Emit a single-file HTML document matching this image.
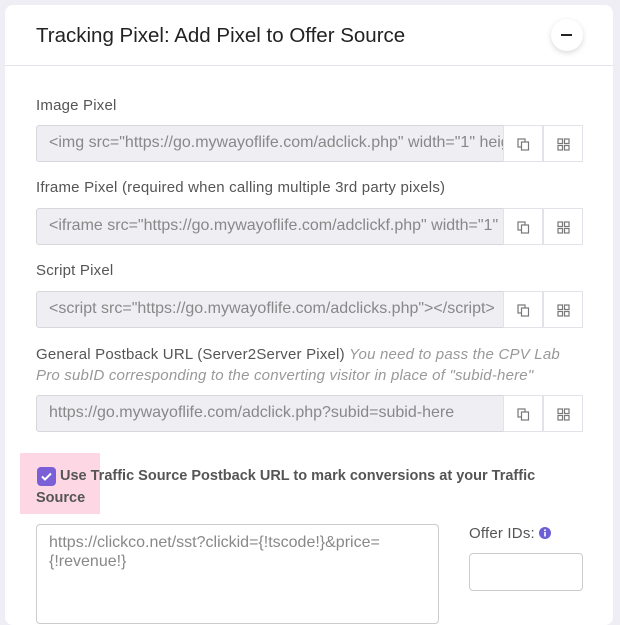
<!DOCTYPE html>
<html><head><meta charset="utf-8"><style>
*{box-sizing:border-box;margin:0;padding:0}
body{width:620px;height:605px;background:#efeef5;font-family:"Liberation Sans",sans-serif;position:relative;overflow:hidden}
.card{position:absolute;left:5px;top:5px;width:608px;height:620px;background:#fff;border-radius:8px}
.hdr{position:absolute;left:0;top:0;width:608px;height:61px;border-bottom:1px solid #e4e4ea}
.title{position:absolute;left:31px;top:19px;font-size:20.5px;color:#222}
.tog{position:absolute;left:546px;top:14px;width:32px;height:32px;border-radius:50%;background:#fff;box-shadow:0 2px 6px rgba(0,0,0,.15)}
.tog:after{content:"";position:absolute;left:10px;top:15px;width:11px;height:2px;background:#222}
.lbl{position:absolute;left:36px;font-size:15px;letter-spacing:0.2px;color:#555}
.lbl i{color:#999}
.inp{position:absolute;left:36px;width:468px;height:37px;background:#efeef3;border:1px solid #d6d6dc;border-radius:3px 0 0 3px;font-size:16px;color:#888;padding:8px 12px;white-space:nowrap;overflow:hidden}
.btn{position:absolute;width:40px;height:37px;border:1px solid #e2e2e8;background:#fff}
.btn svg{position:absolute;left:13px;top:12px}
.chk{position:absolute;left:20px;top:453px;width:80px;height:61px;background:#fdd8e4}
.cb{position:absolute;left:37px;top:467px;width:19px;height:19px;background:#7b5fd6;border-radius:4px}
.ta{position:absolute;left:36px;top:524px;width:403px;height:100px;border:1px solid #ccc;border-radius:4px;font-size:16px;color:#888;padding:8px 12px;line-height:19px}
.oi{position:absolute;left:469px;top:553px;width:114px;height:38px;border:1px solid #ccc;border-radius:4px}
</style></head><body>
<div class="card">
<div class="hdr"><div class="title">Tracking Pixel: Add Pixel to Offer Source</div><div class="tog"></div></div>
</div>
<div class="lbl" style="top:97px">Image Pixel</div>
<div class="inp" style="top:125px">&lt;img src="https://go.mywayoflife.com/adclick.php" width="1" height="1"</div>
<div class="btn" style="left:503px;top:125px"><svg width="13" height="13" viewBox="0 0 13 13" fill="none" stroke="#777" stroke-width="1.2"><rect x="1" y="1" width="7" height="8"/><rect x="4.5" y="4" width="7" height="8" fill="#fff"/></svg></div>
<div class="btn" style="left:543px;top:125px"><svg width="13" height="13" viewBox="0 0 13 13" fill="none" stroke="#777" stroke-width="1.2"><rect x="1" y="1" width="4.5" height="4.5"/><rect x="7.5" y="1" width="4.5" height="4.5"/><rect x="1" y="7.5" width="4.5" height="4.5"/><rect x="7.5" y="7.5" width="4.5" height="4.5"/></svg></div>
<div class="lbl" style="top:179px">Iframe Pixel (required when calling multiple 3rd party pixels)</div>
<div class="inp" style="top:208px">&lt;iframe src="https://go.mywayoflife.com/adclickf.php" width="1"</div>
<div class="btn" style="left:503px;top:208px"><svg width="13" height="13" viewBox="0 0 13 13" fill="none" stroke="#777" stroke-width="1.2"><rect x="1" y="1" width="7" height="8"/><rect x="4.5" y="4" width="7" height="8" fill="#fff"/></svg></div>
<div class="btn" style="left:543px;top:208px"><svg width="13" height="13" viewBox="0 0 13 13" fill="none" stroke="#777" stroke-width="1.2"><rect x="1" y="1" width="4.5" height="4.5"/><rect x="7.5" y="1" width="4.5" height="4.5"/><rect x="1" y="7.5" width="4.5" height="4.5"/><rect x="7.5" y="7.5" width="4.5" height="4.5"/></svg></div>
<div class="lbl" style="top:262px">Script Pixel</div>
<div class="inp" style="top:291px">&lt;script src="https://go.mywayoflife.com/adclicks.php"&gt;&lt;/script&gt;</div>
<div class="btn" style="left:503px;top:291px"><svg width="13" height="13" viewBox="0 0 13 13" fill="none" stroke="#777" stroke-width="1.2"><rect x="1" y="1" width="7" height="8"/><rect x="4.5" y="4" width="7" height="8" fill="#fff"/></svg></div>
<div class="btn" style="left:543px;top:291px"><svg width="13" height="13" viewBox="0 0 13 13" fill="none" stroke="#777" stroke-width="1.2"><rect x="1" y="1" width="4.5" height="4.5"/><rect x="7.5" y="1" width="4.5" height="4.5"/><rect x="1" y="7.5" width="4.5" height="4.5"/><rect x="7.5" y="7.5" width="4.5" height="4.5"/></svg></div>
<div class="lbl" style="top:344px;line-height:21px;width:545px">General Postback URL (Server2Server Pixel) <i>You need to pass the CPV Lab Pro subID corresponding to the converting visitor in place of "subid-here"</i></div>
<div class="inp" style="top:395px">https://go.mywayoflife.com/adclick.php?subid=subid-here</div>
<div class="btn" style="left:503px;top:395px"><svg width="13" height="13" viewBox="0 0 13 13" fill="none" stroke="#777" stroke-width="1.2"><rect x="1" y="1" width="7" height="8"/><rect x="4.5" y="4" width="7" height="8" fill="#fff"/></svg></div>
<div class="btn" style="left:543px;top:395px"><svg width="13" height="13" viewBox="0 0 13 13" fill="none" stroke="#777" stroke-width="1.2"><rect x="1" y="1" width="4.5" height="4.5"/><rect x="7.5" y="1" width="4.5" height="4.5"/><rect x="1" y="7.5" width="4.5" height="4.5"/><rect x="7.5" y="7.5" width="4.5" height="4.5"/></svg></div>
<div class="chk"></div>
<div class="cb"><svg width="19" height="19" viewBox="0 0 19 19"><path d="M5 9.5l3 3 6-6" fill="none" stroke="#fff" stroke-width="2"/></svg></div>
<div class="lbl" style="top:465px;left:36px;width:530px;line-height:22px;font-size:14.5px;font-weight:bold;letter-spacing:0;color:#555;text-indent:24px">Use Traffic Source Postback URL to mark conversions at your Traffic Source</div>
<div class="ta">https://clickco.net/sst?clickid={!tscode!}&amp;price=<br>{!revenue!}</div>
<div class="lbl" style="left:469px;top:525px">Offer IDs: <svg width="12" height="12" viewBox="0 0 12 12" style="vertical-align:-1px"><circle cx="6" cy="6" r="6" fill="#6c5fd6"/><rect x="5.2" y="5" width="1.6" height="4.5" fill="#fff"/><circle cx="6" cy="3.2" r="1" fill="#fff"/></svg></div>
<div class="oi"></div>
</body></html>
